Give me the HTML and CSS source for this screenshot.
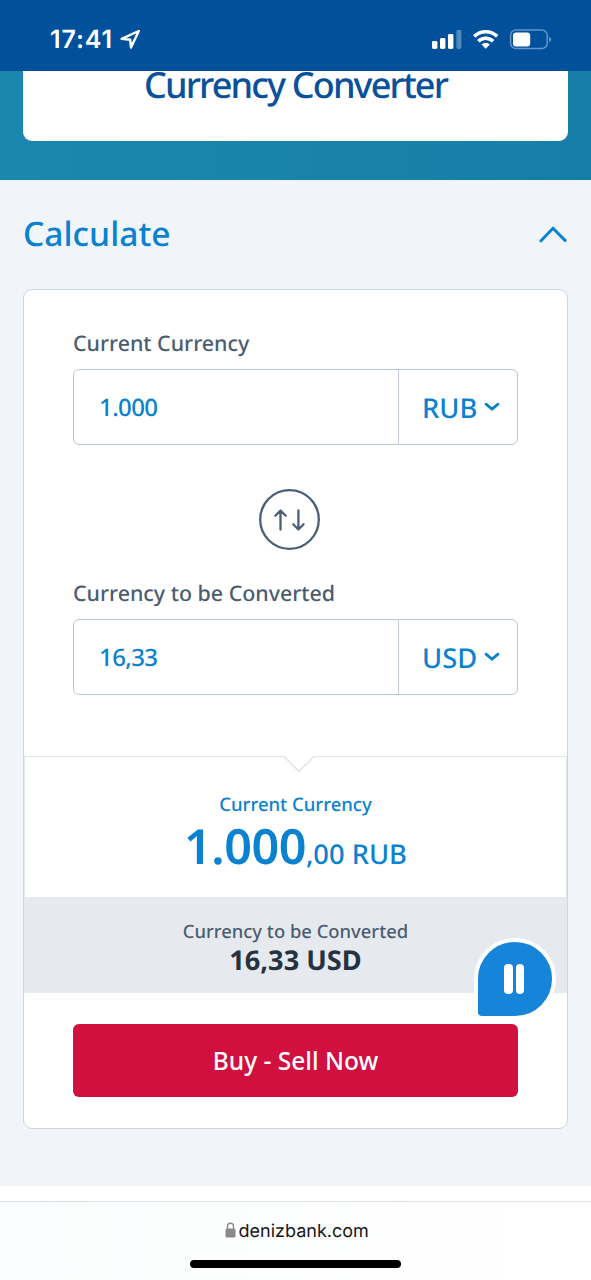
FILE: index.html
```html
<!DOCTYPE html>
<html lang="en">
<head>
<meta charset="utf-8">
<title>Currency Converter</title>
<link rel="stylesheet" href="styles.css">
</head>
<body>
<header class="status">
  <div class="clock"><span class="time">17:41</span>
    <svg class="loc" width="22" height="22" viewBox="0 0 22 22"><path d="M1.6 9.9 18.8 2 11 18.6 10.2 10.7Z" fill="none" stroke="#fff" stroke-width="2.4" stroke-linejoin="round"/></svg>
  </div>
  <svg class="indicators" width="120" height="22" viewBox="0 0 120 22">
    <g fill="#fff"><rect x="0" y="12" width="5.4" height="8" rx="1.4"/><rect x="8" y="9" width="5.4" height="11" rx="1.4"/><rect x="16" y="5" width="5.4" height="15" rx="1.4"/><rect x="24.4" y="1" width="5" height="19" rx="1.4" opacity=".32"/></g>
    <g fill="none" stroke="#fff" stroke-width="3.6"><path d="M42.2 7.4A16.6 16.6 0 0 1 65.2 7.4"/><path d="M46.3 12.3A10.5 10.5 0 0 1 61.1 12.3"/></g>
    <path d="M49.5 15.5a6 6 0 0 1 8.4 0L53.7 19.8Z" fill="#fff"/>
    <rect x="78.6" y="1" width="36.6" height="18.6" rx="5.4" fill="none" stroke="#6795c6" stroke-width="1.5"/>
    <rect x="81" y="3.4" width="17.2" height="14" rx="3" fill="#fff"/>
    <path d="M117.3 7.5q1.8.9 1.8 2.9t-1.8 2.9Z" fill="#7ba4cf"/>
  </svg>
</header>
<div class="hero"><h1 class="title">Currency Converter</h1></div>
<main class="main">
  <div class="heading"><h2 class="calculate">Calculate</h2>
    <svg class="collapse" width="28" height="18" viewBox="0 0 28 18"><path d="M2 15.8 14 3.2 26 15.4" fill="none" stroke="#0a82d0" stroke-width="3" stroke-linecap="round" stroke-linejoin="round"/></svg>
  </div>
  <section class="card">
    <div class="form">
      <div class="label">Current Currency</div>
      <div class="field"><div class="amount">1.000</div><div class="unit"><span class="code">RUB</span><svg width="16" height="10" viewBox="0 0 16 10"><path d="M2 2.2 8 7.2 14 2.2" fill="none" stroke="#0a82d0" stroke-width="2.8" stroke-linecap="round" stroke-linejoin="round"/></svg></div></div>
      <div class="swap"><svg width="61" height="61" viewBox="0 0 61 61" fill="none" stroke="#4b6076" stroke-width="2.3" stroke-linecap="round" stroke-linejoin="round"><circle cx="30.5" cy="30.5" r="29.3"/><path d="M21.5 40.5V21.6M16.3 26.7l5.2-5.2 5.2 5.2M39.4 21.5v18.9M34.2 35.3l5.2 5.2 5.2-5.2"/></svg></div>
      <div class="label">Currency to be Converted</div>
      <div class="field"><div class="amount">16,33</div><div class="unit"><span class="code">USD</span><svg width="16" height="10" viewBox="0 0 16 10"><path d="M2 2.2 8 7.2 14 2.2" fill="none" stroke="#0a82d0" stroke-width="2.8" stroke-linecap="round" stroke-linejoin="round"/></svg></div></div>
    </div>
    <div class="result">
      <svg class="notch" width="32" height="17" viewBox="0 0 32 17"><path d="M1 0h30v1L16 16 1 1Z" fill="#fff"/><path d="M1 .5 16 15.5 31 .5" fill="none" stroke="#dfe2e6" stroke-width="1.4"/></svg>
      <div class="from-label">Current Currency</div>
      <div class="from-value"><span class="big">1.000</span><span class="cents">,00 RUB</span></div>
    </div>
    <div class="converted">
      <div class="to-label">Currency to be Converted</div>
      <div class="to-value">16,33 USD</div>
    </div>
    <div class="action"><button class="buy"><span>Buy - Sell Now</span></button></div>
    <div class="pause"><i></i><i></i></div>
  </section>
</main>
<footer class="browser">
  <div class="address"><svg width="11" height="16" viewBox="0 0 11 16"><rect x=".5" y="6.5" width="10" height="9" rx="1.5" fill="#8a8a8c"/><path d="M2.5 7V4.2a3 3 0 0 1 6 0V7" fill="none" stroke="#8a8a8c" stroke-width="1.4"/></svg><span class="domain">denizbank.com</span></div>
  <div class="home"></div>
</footer>
</body>
</html>
```
FILE: styles.css
```css
* { box-sizing: border-box; }
body { margin: 0; width: 591px; height: 1280px; overflow: hidden; background: #fff; font-family: "Noto Sans", "Open Sans", sans-serif; font-weight: 500; color: #0a82d0; text-rendering: geometricPrecision; }
svg { display: block; flex: none; }
.status { height: 71px; background: #00509b; display: flex; justify-content: space-between; padding: 24px 39px 0 50px; }
.clock { display: flex; gap: 5px; color: #fff; font: 600 25px/32px Inter, sans-serif; }
.time { width: 65px; letter-spacing: .9px; white-space: nowrap; }
.loc { margin-top: 5px; }
.indicators { margin-top: 5px; }
.hero { height: 109px; padding: 0 23px; background: linear-gradient(90deg, #1b87ae, #167ea8); }
.title { margin: 0; height: 70px; background: #fff; border-radius: 0 0 9px 9px; color: #0a509b; font-size: 36px; font-weight: 500; line-height: 28px; letter-spacing: -1.85px; text-align: center; white-space: nowrap; }
.main { height: 1006px; background: #f1f5fa; padding: 30px 23px 0; }
.heading { height: 79px; display: flex; justify-content: space-between; }
.calculate { margin: 0; font-size: 33.6px; font-weight: 500; line-height: 46px; }
.collapse { margin: 15px 1px 0 0; }
.card { position: relative; height: 840px; border: 1.5px solid #cdd5df; border-radius: 9px; background: #fff; }
.form { height: 466px; padding: 36px 49px 0; }
.label { padding-top: 2px; font-size: 21.4px; line-height: 32px; height: 43px; color: #4b5c6f; white-space: nowrap; }
.field { height: 76px; display: flex; border: 1.5px solid #b8c7d6; border-radius: 6px; }
.amount { width: 325px; padding-left: 25px; font-size: 24px; letter-spacing: -.6px; line-height: 76px; border-right: 1px solid #c2ccda; }
.unit { flex: 1; display: flex; padding-left: 23px; gap: 7px; font-size: 27.3px; line-height: 75px; white-space: nowrap; }
.unit svg { margin-top: 32px; }
.code { width: 55px; }
.swap { height: 131px; padding: 44px 0 0 186px; }
.result { position: relative; height: 141px; border: solid #e3e6ea; border-width: 1px 1px 0; text-align: center; }
.notch { position: absolute; left: 258px; top: -1px; }
.from-label { padding-top: 35px; font-size: 18.5px; line-height: 26px; }
.from-value { display: flex; justify-content: center; align-items: baseline; line-height: 56px; white-space: nowrap; }
.big { font-size: 48.5px; font-weight: 600; letter-spacing: -.5px; }
.cents { font-size: 27.3px; }
.converted { height: 96px; padding-top: 21px; background: #e6eaef; text-align: center; }
.to-label { font-size: 18.4px; line-height: 27px; color: #4b5c6f; }
.to-value { font-size: 27.2px; line-height: 30px; font-weight: 700; color: #26323f; }
.action { padding: 31px 49px 0; }
.buy { display: block; width: 100%; height: 73px; padding: 0; border: 0; border-radius: 6px; background: #d1103f; color: #fff; font: 500 24.5px/72px "Noto Sans", sans-serif; }
.pause { position: absolute; left: 450px; top: 648px; width: 82px; height: 82px; border: 4px solid #fff; border-radius: 50% 50% 50% 8px; background: #1684d8; display: flex; justify-content: center; gap: 3px; padding: 22px 2px 0 0; }
.pause i { width: 8.5px; height: 30px; border-radius: 4px; background: #fff; }
.browser { margin-top: 15px; height: 79px; border-top: 1px solid #dcdfe2; background: linear-gradient(90deg, #fafcfd, #fff 90%); }
.address { display: flex; padding: 20px 0 0 225px; gap: 2.5px; }
.domain { font: 400 18px/20px Inter, sans-serif; height: 20px; color: #161616; }
.home { width: 211px; height: 8px; margin: 18px 0 0 190px; border-radius: 4px; background: #000; }
```
